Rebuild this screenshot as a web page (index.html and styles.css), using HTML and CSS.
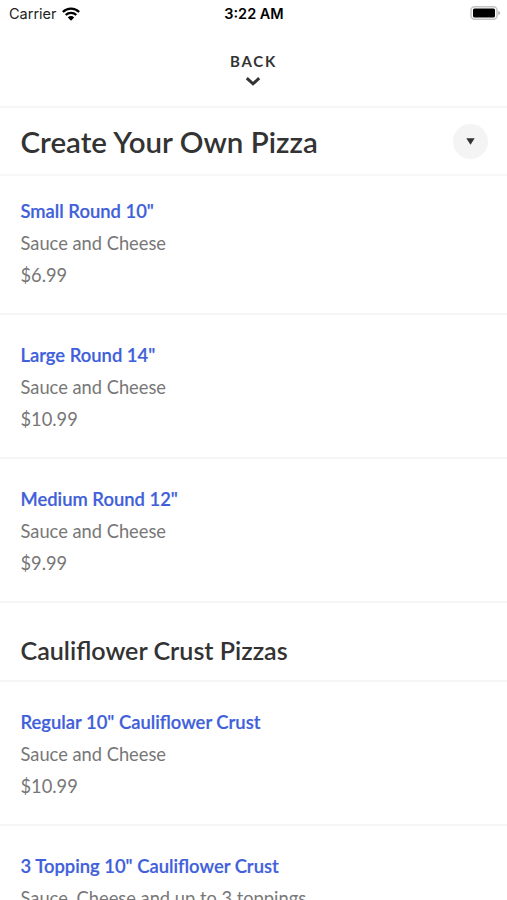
FILE: index.html
```html
<!DOCTYPE html>
<html lang="en">
<head>
    <meta charset="UTF-8">
    <meta name="viewport" content="width=device-width, initial-scale=1.0">
    <title>Create Your Own Pizza</title>
    <link rel="stylesheet" href="styles.css">
</head>
<body>
    <div class="status-bar">
        <div class="status-left">
            <span>Carrier</span>
            <svg class="wifi" width="18" height="14" viewBox="0 0 18 14">
                <path d="M0.900 5a11.500 11.500 0 0 1 16.200 0M3.700 8a7.600 7.600 0 0 1 10.600 0" fill="none" stroke="#000" stroke-width="2.400"/>
                <path d="M5.800 10.400a4.600 4.600 0 0 1 6.400 0L9 13.700z"/>
            </svg>
        </div>
        <div class="status-time">3:22 AM</div>
        <div class="status-right">
            <svg width="31" height="14" viewBox="0 0 31 14">
                <rect x="1" y="0.800" width="26" height="12.400" rx="3.500" fill="none" stroke="#c4c4c4" stroke-width="1.500"/>
                <rect x="3" y="2.500" width="22" height="9" rx="1.500"/>
                <path d="M28.300 5v4c2.200-.6 2.200-3.400 0-4z" fill="#aaa"/>
            </svg>
        </div>
    </div>

    <header class="back">
        <span class="back-label">BACK</span>
        <svg width="16" height="10" viewBox="0 0 16 10">
            <path d="M1.800 2.200L8 7.800l6.200-5.600" fill="none" stroke="#333" stroke-width="3"/>
        </svg>
    </header>

    <div class="menu-title">
        <h1>Create Your Own Pizza</h1>
        <button class="toggle" aria-label="Choose menu">
            <svg width="9" height="7" viewBox="0 0 9 7"><path d="M0.300 0.300h8.400L4.500 6.700z" fill="#333"/></svg>
        </button>
    </div>

    <div class="item first">
        <h3>Small Round 10"</h3>
        <p>Sauce and Cheese</p>
        <p>$6.99</p>
    </div>
    <div class="item">
        <h3>Large Round 14"</h3>
        <p>Sauce and Cheese</p>
        <p>$10.99</p>
    </div>
    <div class="item">
        <h3>Medium Round 12"</h3>
        <p>Sauce and Cheese</p>
        <p>$9.99</p>
    </div>

    <h2 class="section-title">Cauliflower Crust Pizzas</h2>

    <div class="item">
        <h3>Regular 10" Cauliflower Crust</h3>
        <p>Sauce and Cheese</p>
        <p>$10.99</p>
    </div>
    <div class="item">
        <h3>3 Topping 10" Cauliflower Crust</h3>
        <p>Sauce, Cheese and up to 3 toppings</p>
    </div>
</body>
</html>
```
FILE: styles.css
```css
* { box-sizing: border-box; }
body { margin: 0; height: 900px; overflow: hidden; background: #fff; color: #333; font-family: Lato, sans-serif; }
h1, h2, h3, p { margin: 0; }
.status-bar { display: grid; grid-template-columns: 1fr auto 1fr; align-items: center; height: 26px; padding: 0 6px 0 9px; font-family: Inter, sans-serif; font-size: 14.5px; color: #000; }
.status-left { display: flex; align-items: center; gap: 5px; color: #222; padding-top: 1px; }
.status-time { font-weight: 600; padding-top: 1px; margin-right: 2px; }
.status-right { display: flex; justify-content: flex-end; }
.back { display: flex; flex-direction: column; align-items: center; height: 82px; padding-top: 25px; border-bottom: 2px solid #f6f6f6; }
.back-label { font-size: 15px; line-height: 20px; font-weight: 700; letter-spacing: 1.8px; margin-bottom: 5px; }
.back svg { margin-right: 1px; }
.menu-title { display: flex; align-items: center; justify-content: space-between; height: 68px; padding: 0 19px 0 20.5px; border-bottom: 2px solid #f8f8f8; }
.menu-title h1 { font-size: 29.5px; font-weight: 600; }
.toggle { display: flex; align-items: center; justify-content: center; width: 35px; height: 35px; padding: 0; border: none; border-radius: 50%; background: #f4f4f4; }
.item { height: 144px; padding: 25px 20.5px 0; border-bottom: 2px solid #f6f6f6; line-height: 31.8px; }
.item.first { height: 139px; padding-top: 20px; }
.item h3 { font-size: 18.4px; font-weight: 600; color: #415fda; -webkit-text-stroke: 0.2px #415fda; }
.item p { font-size: 18.3px; color: #777; }
.section-title { height: 79px; padding: 30px 20.5px 0; border-bottom: 2px solid #f6f6f6; font-size: 25.1px; line-height: 34px; font-weight: 600; }
```
